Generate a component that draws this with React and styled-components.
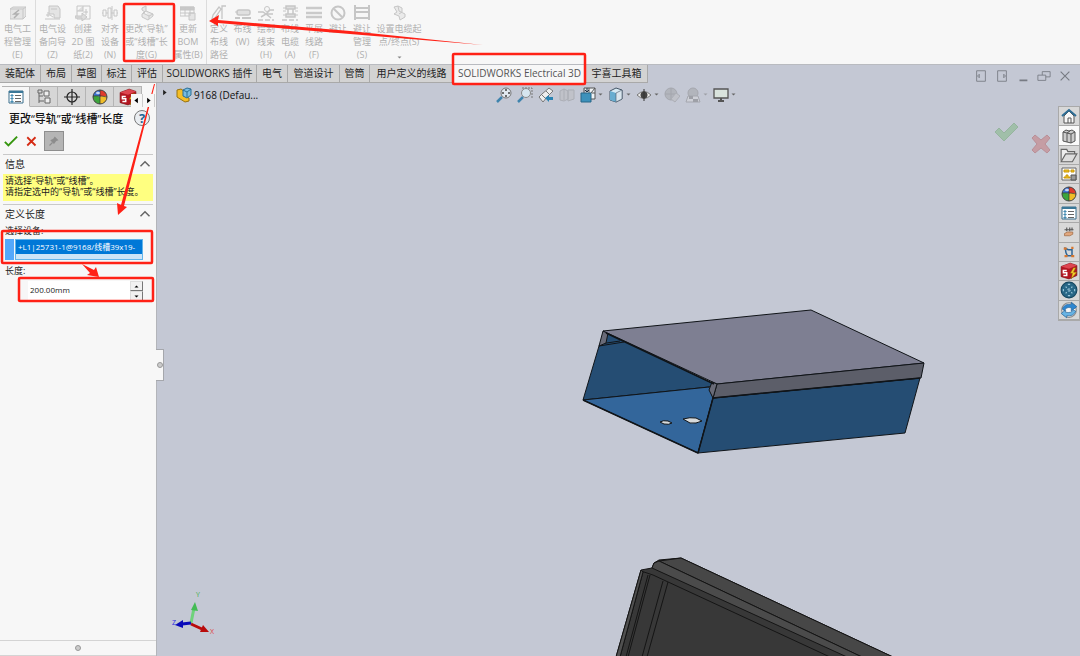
import React, { useState } from "react";
import styled, { createGlobalStyle } from "styled-components";

const GlobalStyle = createGlobalStyle`
  * {
    box-sizing: border-box;
  }
  body {
    margin: 0;
    background: #c4c8d4;
    color: #222;
    font-family: "Open Sans", "Noto Sans CJK SC", sans-serif;
    font-size: 9px;
  }
  button, input {
    font: inherit;
    color: inherit;
    border: 0;
    padding: 0;
    margin: 0;
    background: none;
  }
  h1, h2, p, ul {
    margin: 0;
    padding: 0;
    font-weight: 400;
  }
  svg {
    display: block;
    flex: none;
  }
`;

const Page = styled.div`
  position: relative;
  min-height: 100vh;
  display: flex;
  flex-direction: column;
  overflow: hidden;
`;

const Ribbon = styled.div`
  display: flex;
  height: 64px;
  background: #f7f7f7;
`;

const Tool = styled.button`
  display: flex;
  flex-direction: column;
  align-items: center;
  gap: 1px;
  width: ${(p) => p.$width}px;
  padding-top: 5px;
  border-right: ${(p) => (p.$divider ? "1px solid #dcdcdc" : "0")};
  color: #b0b0b0;
  line-height: 13px;
  white-space: nowrap;
`;

const ToolLabel = styled.span`
  display: flex;
  flex-direction: column;
  align-items: center;
`;

const TabBar = styled.div`
  display: flex;
  height: 19px;
  border-top: 1px solid #b9bbc0;
`;

const Tab = styled.button`
  width: ${(p) => p.$width}px;
  white-space: nowrap;
  font-size: 10px;
  line-height: 17px;
  color: ${(p) => (p.$active ? "#555" : "#222")};
  background: ${(p) => (p.$active ? "#f7f7f7" : "#d3d3d3")};
  border-right: 1px solid #a9a9a9;
  border-bottom: 1px solid ${(p) => (p.$active ? "#f7f7f7" : "#a9a9a9")};
`;

const WindowControls = styled.div`
  display: flex;
  align-items: flex-end;
  gap: 7px;
  margin-left: auto;
  padding-right: 8px;
`;

const Body = styled.div`
  flex: 1;
  display: flex;
`;

const Panel = styled.aside`
  display: flex;
  flex-direction: column;
  width: 157px;
  background: #f7f7f7;
  border-right: 1px solid #b3b5ba;
`;

const PanelTabs = styled.div`
  display: flex;
  height: 24px;
  padding: 3px 0 0 2px;
`;

const PanelTab = styled.button`
  display: grid;
  place-items: center;
  width: 28px;
  border: 1px solid #b4b4b4;
  border-left: 0;
  border-bottom-color: ${(p) => (p.$active ? "#f7f7f7" : "#b4b4b4")};
  background: ${(p) => (p.$active ? "#f7f7f7" : "#d6d6d6")};
`;

const TabScroll = styled.div`
  display: flex;
  align-self: flex-end;
  margin-left: -11px;
  z-index: 1;
`;

const ScrollButton = styled.button`
  display: grid;
  place-items: center;
  width: 12px;
  height: 13px;
  background: #f7f7f7;
  border-right: 1px solid #ccc;
`;

const PanelHeader = styled.div`
  display: flex;
  align-items: center;
  justify-content: space-between;
  height: 22px;
  padding: 0 6px 0 9px;
`;

const PanelTitle = styled.h1`
  font-size: 11px;
  font-weight: 500;
  color: #111;
  white-space: nowrap;
`;

const HelpButton = styled.button`
  width: 16px;
  height: 16px;
  border: 1px solid #777;
  border-radius: 50%;
  background: #e9edf1;
  color: #1f6694;
  font-size: 13px;
  font-weight: 700;
  line-height: 14px;
`;

const PanelActions = styled.div`
  display: flex;
  align-items: center;
  gap: 6px;
  height: 23px;
  padding-left: 4px;
`;

const ActionButton = styled.button`
  display: grid;
  place-items: center;
  width: ${(p) => (p.$pressed ? 20 : 14)}px;
  height: 20px;
  border: ${(p) => (p.$pressed ? "1px solid #8e8e8e" : "0")};
  background: ${(p) => (p.$pressed ? "#b5b5b5" : "none")};
`;

const Section = styled.section`
  margin: ${(p) => p.$top || 0}px 3px 0;
  border-top: 1px solid #c9c9c9;
`;

const SectionHeader = styled.button`
  display: flex;
  align-items: center;
  justify-content: space-between;
  width: 100%;
  height: 19px;
  padding: 0 2px 2px;
  font-size: 10px;
`;

const Message = styled.p`
  padding: 1px 2px;
  height: 27px;
  line-height: 11px;
  background: #ffff80;
  white-space: nowrap;
`;

const FieldLabel = styled.label`
  display: block;
  height: ${(p) => p.$height}px;
  padding-left: 2px;
  line-height: 13px;
`;

const Selection = styled.div`
  display: flex;
  gap: 1px;
  height: 21px;
  margin: 3px 10px 4px 2px;
`;

const Swatch = styled.span`
  width: 9px;
  background: #55a8fb;
`;

const SelectionList = styled.ul`
  flex: 1;
  min-width: 0;
  border: 1px solid #62b4ea;
  background: #cce4f7;
  list-style: none;
`;

const SelectionItem = styled.li`
  height: 14px;
  padding-left: 2px;
  font-size: 8px;
  line-height: 14px;
  white-space: nowrap;
  color: #fff;
  background: #0078d7;
`;

const Spinner = styled.div`
  display: flex;
  height: 20px;
  margin: 0 10px 0 25px;
  background: #fff;
`;

const LengthInput = styled.input`
  flex: 1;
  min-width: 0;
  height: 16px;
  padding-left: 2px;
  font-size: 8px;
  outline: none;
`;

const SpinButtons = styled.div`
  display: flex;
  flex-direction: column;
`;

const SpinButton = styled.button`
  display: grid;
  place-items: center;
  width: 13px;
  height: 10px;
  background: #f1f1f1;
  border: 1px solid #ddd;
  border-right-color: #777;
  border-bottom-color: #777;
`;

const PanelFooter = styled.div`
  display: grid;
  place-items: center;
  height: 16px;
  margin-top: auto;
  border-top: 1px solid #d4d4d4;
  border-bottom: 1px solid #d4d4d4;
`;

const Grip = styled.span`
  width: 6px;
  height: 6px;
  border: 1px solid #999;
  border-radius: 50%;
  background: #ccc;
`;

const Viewport = styled.main`
  position: relative;
  flex: 1;
  min-width: 0;
  display: flex;
  flex-direction: column;
`;

const Scene = styled.svg`
  position: absolute;
  top: 0;
  left: 0;
`;

const PanelHandle = styled.button`
  position: absolute;
  top: 266px;
  left: -1px;
  display: grid;
  place-items: center;
  width: 8px;
  height: 32px;
  background: #f7f7f7;
  border: 1px solid #a5a7ac;
  border-left: 0;
`;

const ViewHeader = styled.div`
  position: relative;
  display: grid;
  grid-template-columns: 1fr auto 1fr;
  align-items: center;
  height: 23px;
`;

const TreeNode = styled.button`
  display: flex;
  align-items: center;
  gap: 2px;
  padding-left: 4px;
  font-size: 10px;
  color: #111;
`;

const TreeArrow = styled.span`
  padding: 0 6px 4px 0;
`;

const HeadsUp = styled.div`
  display: flex;
  align-items: center;
  gap: 5px;
  padding-right: 6px;
`;

const ViewButton = styled.button`
  display: flex;
  align-items: center;
  gap: 2px;
  opacity: ${(p) => (p.$dim ? 0.4 : 1)};
`;

const ViewBody = styled.div`
  position: relative;
  display: flex;
  justify-content: flex-end;
  align-items: flex-start;
`;

const ConfirmCorner = styled.div`
  display: flex;
  gap: 12px;
  padding: 3px 7px 0 0;
`;

const CornerButton = styled.button`
  padding-top: ${(p) => p.$drop || 0}px;
`;

const TaskPane = styled.nav`
  display: flex;
  flex-direction: column;
  width: 22px;
  height: 215px;
  border: 1px solid #a9a9a9;
`;

const PaneButton = styled.button`
  flex: 1;
  display: grid;
  place-items: center;
  background: ${(p) => (p.$active ? "#fafafa" : "#d8d8d8")};
  border-bottom: 1px solid #a9a9a9;
`;

const Annotations = styled.svg`
  position: absolute;
  top: 0;
  left: 0;
  pointer-events: none;
`;

function Icon({ size = 16, children, ...rest }) {
  return (
    <svg width={size} height={size} viewBox="0 0 16 16" fill="none" aria-hidden="true" {...rest}>
      {children}
    </svg>
  );
}

const RIBBON_ICONS = {
  manage: (
    <>
      <path d="M0 4l3-2h13v9l-3 3H0z" fill="#e4e4e4" />
      <path d="M0 4h13v10M13 4l3-2" />
      <path d="M9 5L4 9h4l-4 4" stroke="#b0b0b0" strokeWidth="1.5" />
    </>
  ),
  wizard: (
    <>
      <path d="M4 1h9l2 3v9H9V9H4z" fill="#e4e4e4" />
      <path d="M1 10h4l3 2M0 14h15M6 4h6M3 7v5" />
    </>
  ),
  create: (
    <>
      <path d="M2 1h13v13H2z" />
      <path d="M8 1v5H2M11 4v6M8 7h5M0 11h7V8l5 4-5 4v-3H0z" fill="#ddd" />
    </>
  ),
  align: <path d="M1 5h3v6H1zM6 3h3v10H6zM12 5h3v6h-3zM10 1v14M4 8h2M9 8h3M0 8h1M15 8h1" />,
  rail: <path d="M3 3l4-2v5l7 3v2l-5 4-6-3V9l3-2-3-2zM7 6L4 8l6 3v3M10 11l4-2" fill="#e8e8e8" />,
  bom: (
    <>
      <path d="M0 2h14v9H0z" />
      <path d="M0 2h14v3H0z" fill="#c8c8c8" />
      <path d="M0 8h14M5 2v9M10 2v9M9 8h6v7H9z" fill="#e4e4e4" />
    </>
  ),
  define: <path d="M8 2l2 2-6 9-3 1 1-4zM15 1h-4v13" strokeWidth="1.3" />,
  route: (
    <>
      <rect x="2" y="5" width="13" height="5" rx="2" fill="#e0e0e0" strokeWidth="1.5" />
      <path d="M0 7h3" />
      <path d="M0 13h5M7 13h9" strokeWidth="2" />
    </>
  ),
  harness: (
    <>
      <circle cx="9" cy="4" r="2.5" />
      <path d="M0 7h5l3 2 4-4h4M3 12l5-3 5 4M9 9h6" strokeWidth="1.5" />
      <path d="M0 15h16" strokeDasharray="5 2" strokeWidth="1.5" />
    </>
  ),
  cable: (
    <>
      <path d="M4 1h9v3H4zM4 9h9v3H4zM6 4v5M11 4v5" fill="#ddd" strokeWidth="1.5" />
      <path d="M1 3h3M13 3h3M1 6h3M13 6h3M1 10h3M13 10h3" />
      <path d="M0 15h16" strokeDasharray="5 2" strokeWidth="1.5" />
    </>
  ),
  flatten: <path d="M0 3h16M0 8h16M0 12h16" stroke="#cacaca" strokeWidth="2.5" />,
  avoid: (
    <>
      <circle cx="8" cy="8" r="6.5" strokeWidth="2" />
      <path d="M4 4l8 8" strokeWidth="2" />
    </>
  ),
  avoidManage: <path d="M1 0v15M15 0v15M1 3h14M1 7h14M1 13h14" strokeWidth="2" />,
  terminal: <path d="M3 2l4-1 1 5 6 3v3l-5 3-1-4-5-2 3-2zM7 1l4 2v4l-3 2" fill="#eaeaea" />,
};

const TOOLS = [
  { icon: "manage", width: 36, lines: ["电气工", "程管理", "(E)"], divider: true },
  { icon: "wizard", width: 33, lines: ["电气设", "备向导", "(Z)"] },
  { icon: "create", width: 28, lines: ["创建", "2D 图", "纸(2)"] },
  { icon: "align", width: 26, lines: ["对齐", "设备", "(N)"] },
  { icon: "rail", width: 47, lines: ["更改“导轨”", "或“线槽”长", "度(G)"] },
  { icon: "bom", width: 37, lines: ["更新", "BOM", "属性(B)"], divider: true },
  { icon: "define", width: 24, lines: ["定义", "布线", "路径"] },
  { icon: "route", width: 23, lines: ["布线", "(W)"] },
  { icon: "harness", width: 24, lines: ["绘制", "线束", "(H)"] },
  { icon: "cable", width: 24, lines: ["布线", "电缆", "(A)"] },
  { icon: "flatten", width: 24, lines: ["平展", "线路", "(F)"] },
  { icon: "avoid", width: 24, lines: ["避让"] },
  { icon: "avoidManage", width: 24, lines: ["避让", "管理", "(S)"] },
  { icon: "terminal", width: 50, lines: ["设置电缆起", "点/终点(S)"], menu: true },
];

const TABS = [
  { label: "装配体", width: 41 },
  { label: "布局", width: 31 },
  { label: "草图", width: 30 },
  { label: "标注", width: 30 },
  { label: "评估", width: 31 },
  { label: "SOLIDWORKS 插件", width: 94 },
  { label: "电气", width: 31 },
  { label: "管道设计", width: 52 },
  { label: "管筒", width: 30 },
  { label: "用户定义的线路", width: 84 },
  { label: "SOLIDWORKS Electrical 3D", width: 132 },
  { label: "宇喜工具箱", width: 62 },
];

function Ball({ size = 16 }) {
  return (
    <Icon size={size}>
      <path d="M8 8L8 1a7 7 0 0 0-7 6z" fill="#3d74d8" />
      <path d="M8 8V1a7 7 0 0 1 7 7q-3-2-7 0z" fill="#e03a2b" />
      <path d="M8 8q4-2 7 0a7 7 0 0 1-7 7z" fill="#f0bd28" />
      <path d="M8 8v7a7 7 0 0 1-7-8q4-1 7 1z" fill="#3ca53c" />
      <circle cx="8" cy="8" r="7" stroke="#444" />
      <path d="M8 1v14M1 7q7-1 14 1" stroke="#333" strokeWidth=".7" />
      <ellipse cx="6" cy="4" rx="2" ry="1.3" fill="#fff" opacity=".7" />
    </Icon>
  );
}

function ListIcon() {
  return (
    <Icon>
      <path d="M1 2h14v12H1z" fill="#fff" stroke="#3b6f8c" />
      <path d="M1 2h14v2H1z" fill="#3b7898" />
      <path d="M3 6h2v1H3zM3 9h2v1H3zM3 12h2v1H3z" stroke="#2d7ca8" />
      <path d="M7 6.5h6M7 9.5h6M7 12.5h6" stroke="#666" />
    </Icon>
  );
}

function CubeS() {
  return (
    <Icon size={18}>
      <path d="M1 4l8-3 6 2v9l-7 3-7-2z" fill="#b41520" stroke="#7c0d14" strokeWidth=".6" />
      <path d="M1 4l7 2 7-3-6-2z" fill="#dd4650" />
      <path d="M6 7.5H3v2h3V12H3" stroke="#fff" strokeWidth="1.3" />
      <path d="M12 5l-3 5h2l-1 5 5-6h-3l2-4z" fill="#f6cc2b" stroke="#775400" strokeWidth=".4" />
    </Icon>
  );
}

const PANEL_TABS = [
  { name: "PropertyManager", icon: <ListIcon /> },
  {
    name: "ConfigurationManager",
    icon: (
      <Icon stroke="#666">
        <path d="M2 1h4v3H2zM3 4v10M3 12h5M3 7h4" />
        <path d="M8 2h5v5H8zM9 9h5v5H9z" fill="#eee" />
      </Icon>
    ),
  },
  {
    name: "DimXpertManager",
    icon: (
      <Icon stroke="#222" strokeWidth="1.2">
        <circle cx="8" cy="8" r="5" />
        <path d="M8 0v16M0 8h16" />
      </Icon>
    ),
  },
  { name: "DisplayManager", icon: <Ball /> },
  { name: "Electrical", icon: <CubeS /> },
];

const WINDOW_ICONS = [
  ["左", <path d="M3 2h10v12H3zM6 6v4L4 8z" />],
  ["右", <path d="M3 2h10v12H3zM10 6v4l2-2z" />],
  ["最小化", <path d="M4 13h9" strokeWidth="2" />],
  ["还原", <path d="M1 7h9v6H1zM6 7V3h9v6h-5" />],
  ["关闭", <path d="M3 3l10 10M13 3L3 13" strokeWidth="1.3" />],
];

const VIEW_ICONS = [
  {
    name: "整屏显示全图",
    art: (
      <>
        <circle cx="10" cy="6" r="5" fill="#e1e8ef" stroke="#777" />
        <path d="M10 2v2M10 8v2M6 6h2M12 6h2" stroke="#444" strokeWidth="1.5" />
        <path d="M6 10l-5 5" stroke="#3f84ad" strokeWidth="2.5" />
      </>
    ),
  },
  {
    name: "局部放大",
    art: (
      <>
        <path d="M5 1h10v10" stroke="#777" strokeDasharray="2 1" />
        <circle cx="9" cy="6" r="4.5" fill="#d5e5ef" stroke="#888" />
        <path d="M6 10l-5 5" stroke="#3f84ad" strokeWidth="2.5" />
      </>
    ),
  },
  {
    name: "上一视图",
    art: (
      <>
        <path d="M1 10l3-3 7-6 4 3-6 6-4 5z" fill="#eee" stroke="#777" />
        <path d="M4 8l4 4M8 4l4 4" stroke="#777" />
        <path d="M7 11l4-3v2h4v3h-4v2z" fill="#2b83b2" />
      </>
    ),
  },
  {
    name: "剖面视图",
    dim: true,
    art: <path d="M1 4l4-2 4 2v8l-4 2-4-1zM9 3h6v9l-6 2zM5 2v11" fill="#bbb" stroke="#888" />,
  },
  {
    name: "视图定向",
    menu: true,
    art: (
      <>
        <path d="M4 1h11v11h-4M4 1v5M15 1l-4 5M9 1v5M12 6h3" fill="#eef2f5" stroke="#555" />
        <path d="M1 6h10v9H1z" fill="#3d91bb" stroke="#286787" />
        <path d="M7 1v4M5 3l2 2 2-2" stroke="#234" />
      </>
    ),
  },
  {
    name: "显示样式",
    menu: true,
    art: (
      <>
        <path d="M2 4l6-3 6 2v9l-6 3-6-2z" fill="#d5e9f3" stroke="#456" />
        <path d="M2 4l6 2v9l-6-2z" fill="#67add0" />
        <path d="M8 6l6-3v9l-6 3z" fill="#d9e6ee" stroke="#456" strokeWidth=".6" />
      </>
    ),
  },
  {
    name: "隐藏/显示项目",
    menu: true,
    art: (
      <>
        <path d="M1 8q7-7 14 0-7 7-14 0z" fill="#eee" stroke="#777" />
        <circle cx="8" cy="8" r="3.5" fill="#444" />
        <path d="M8 2v12" stroke="#333" />
      </>
    ),
  },
  {
    name: "编辑外观",
    dim: true,
    art: (
      <>
        <circle cx="7" cy="7" r="6" fill="#999" stroke="#777" />
        <path d="M1 7h12M7 1v12" stroke="#777" />
        <path d="M7 12l5-6 4 3-5 6z" fill="#bbb" stroke="#888" />
      </>
    ),
  },
  {
    name: "应用布景",
    menu: true,
    dim: true,
    art: (
      <>
        <circle cx="8" cy="6" r="5" fill="#999" stroke="#777" />
        <path d="M1 15l2-6h10l2 6z" fill="#ddd" stroke="#777" />
        <path d="M4 9h4v3H4zM8 12h5v3H8z" fill="#666" />
      </>
    ),
  },
  {
    name: "视图设定",
    menu: true,
    art: (
      <>
        <path d="M1 2h14v9H1z" fill="#d9e3dd" stroke="#555" strokeWidth="1.3" />
        <path d="M8 11v3M5 14h6" stroke="#555" strokeWidth="2" />
      </>
    ),
  },
];

const PANE_ICONS = [
  {
    name: "主页",
    icon: (
      <Icon>
        <path d="M3 8v7h10V8L8 3z" fill="#f7f7f7" stroke="#555" />
        <path d="M1 8l7-6 7 6" stroke="#2c6c94" strokeWidth="2" />
        <path d="M7 15v-5h3v5" stroke="#555" />
      </Icon>
    ),
  },
  {
    name: "设计库",
    icon: (
      <Icon stroke="#555">
        <path d="M2 4l3-2 3 1 3-1 3 2v9l-4 2-8-2z" fill="#ccc" />
        <path d="M2 4l4 1v9M6 5l3-2M6 5l4 1v9M10 6l4-2" />
      </Icon>
    ),
  },
  {
    name: "文件探索器",
    icon: (
      <Icon size={18}>
        <path d="M1 13V3h5l1 2h6v3" fill="#eee" stroke="#666" />
        <path d="M1 14l4-7h10l-4 7z" fill="#ddd" stroke="#666" />
      </Icon>
    ),
  },
  {
    name: "视图调色板",
    icon: (
      <Icon>
        <path d="M1 2h14v12H1z" fill="#fff" stroke="#666" />
        <path d="M3 4h5v2H3zM10 4h3v2h-3zM5 9h2v2h2v1H3v-1h2z" fill="#f7c924" stroke="#c79508" />
        <path d="M10 9h5v5h-5z" fill="#999" stroke="#555" />
      </Icon>
    ),
  },
  { name: "外观", icon: <Ball /> },
  { name: "自定义属性", icon: <ListIcon /> },
  {
    name: "线束",
    icon: (
      <Icon size={12}>
        <path d="M2 5h12M5 2v5M9 2v5M12 2v4" stroke="#555" strokeWidth="1.5" />
        <path d="M2 10l4-2h7v3l-4 2H2z" fill="#e1a77d" stroke="#a16c46" />
      </Icon>
    ),
  },
  {
    name: "布线",
    icon: (
      <Icon size={12}>
        <path d="M3 3l4 2h5v8H6L4 9z" stroke="#2f6695" strokeWidth="2" />
        <path d="M1 2h4v3H1zM11 12h4v3h-4zM11 1h3v3h-3zM2 12h4v3H2z" fill="#d9772c" />
      </Icon>
    ),
  },
  { name: "Electrical", icon: <CubeS /> },
  {
    name: "资源",
    icon: (
      <Icon size={18}>
        <circle cx="8" cy="8" r="7" fill="#286786" stroke="#164761" />
        <path d="M7 3h2M7 13h2M3 7v2M13 7v2M5 5l1 1M11 5l-1 1M5 11l1-1M11 11l-1-1" stroke="#9cc7db" />
        <path d="M9 7H7v1h2v1H7" stroke="#9cc7db" strokeWidth=".7" />
      </Icon>
    ),
  },
  {
    name: "同步",
    icon: (
      <Icon size={18}>
        <circle cx="8" cy="8" r="6.5" fill="#f6f6f6" stroke="#888" />
        <path d="M2 7q2-5 8-4V1l5 4-5 4V6Q5 5 4 9z" fill="#2d86d0" stroke="#1d5588" strokeWidth=".5" />
        <path d="M14 9q-2 5-8 4v2l-5-4 4-3v2q5 1 7-2z" fill="#68b4e4" stroke="#1d5588" strokeWidth=".5" />
      </Icon>
    ),
  },
];

function Caret({ dir = "down", size = 5, color = "#666", ...rest }) {
  const shapes = {
    down: "M1 3h8L5 7z",
    up: "M1 7h8L5 3z",
    left: "M7 1v8L2 5z",
    right: "M3 1v8l5-4z",
  };
  return (
    <svg width={size} height={size} viewBox="0 0 10 10" aria-hidden="true" {...rest}>
      <path d={shapes[dir]} fill={color} />
    </svg>
  );
}

function Chevron() {
  return (
    <Icon size={12}>
      <path d="M2 11l6-6 6 6" stroke="#666" strokeWidth="2" />
    </Icon>
  );
}

function PropertyPanel() {
  const [length, setLength] = useState("200.00mm");
  const step = (n) => setLength(`${(parseFloat(length) + n).toFixed(2)}mm`);

  return (
    <Panel>
      <PanelTabs>
        {PANEL_TABS.map((t, i) => (
          <PanelTab key={t.name} $active={i === 0} aria-label={t.name}>
            {t.icon}
          </PanelTab>
        ))}
        <TabScroll>
          <ScrollButton aria-label="向左">
            <Caret dir="left" size={7} color="#000" />
          </ScrollButton>
          <ScrollButton aria-label="向右">
            <Caret dir="right" size={7} color="#000" />
          </ScrollButton>
        </TabScroll>
      </PanelTabs>

      <PanelHeader>
        <PanelTitle>更改“导轨”或“线槽”长度</PanelTitle>
        <HelpButton aria-label="帮助">?</HelpButton>
      </PanelHeader>
      <PanelActions>
        <ActionButton aria-label="确定">
          <Icon size={14}>
            <path d="M1 9l4 4L15 3" stroke="#36960f" strokeWidth="2.2" />
          </Icon>
        </ActionButton>
        <ActionButton aria-label="取消">
          <Icon size={12}>
            <path d="M3 3l11 11M14 3L3 14" stroke="#d52b14" strokeWidth="2.4" />
          </Icon>
        </ActionButton>
        <ActionButton $pressed aria-label="保持可见">
          <Icon size={12}>
            <path d="M9 2l5 5-3 1-3 4-5-5 4-2z" fill="#8c8c8c" />
            <path d="M6 10l-4 4" stroke="#8c8c8c" strokeWidth="1.5" />
          </Icon>
        </ActionButton>
      </PanelActions>

      <Section $top={2}>
        <SectionHeader>
          信息
          <Chevron />
        </SectionHeader>
        <Message>
          请选择“导轨”或“线槽”。
          <br />
          请指定选中的“导轨”或“线槽”长度。
        </Message>
      </Section>
      <Section $top={3}>
        <SectionHeader>
          定义长度
          <Chevron />
        </SectionHeader>
        <FieldLabel as="div" id="device-label" $height={12}>
          选择设备:
        </FieldLabel>
        <Selection>
          <Swatch />
          <SelectionList role="listbox" aria-labelledby="device-label">
            <SelectionItem role="option" aria-selected="true">
              +L1|25731-1@9168/线槽39x19-
            </SelectionItem>
          </SelectionList>
        </Selection>
        <FieldLabel htmlFor="length" $height={17}>
          长度:
        </FieldLabel>
        <Spinner>
          <LengthInput id="length" value={length} onChange={(e) => setLength(e.target.value)} />
          <SpinButtons>
            <SpinButton aria-label="增加" onClick={() => step(10)}>
              <Caret dir="up" color="#000" />
            </SpinButton>
            <SpinButton aria-label="减少" onClick={() => step(-10)}>
              <Caret color="#000" />
            </SpinButton>
          </SpinButtons>
        </Spinner>
      </Section>
      <PanelFooter>
        <Grip />
      </PanelFooter>
    </Panel>
  );
}

function Model() {
  return (
    <Scene width="923" height="573" viewBox="157 83 923 573" strokeLinejoin="round" aria-hidden="true">
      {/* wiring duct with cover */}
      <g stroke="#101418" strokeWidth="1">
        <path d="M599 346L607 333L714 384L709 387L583 400z" fill="#254d73" />
        <path d="M583 400L709 387L713 398L698 453z" fill="#33669b" />
        <path d="M713 398L920 378L905 433L698 453z" fill="#254d73" />
        <path d="M599 346l25-4M600 344l20-3" />
        <path d="M603 331L608 333L606 343L599 346z" fill="#696b78" />
        <path d="M603 331L811 310L924 363L717 384z" fill="#7e7f92" />
        <path d="M717 384L924 363L921 378L713 398z" fill="#5c5e69" />
        <path d="M712 382L717 384L713 398L709 390z" fill="#696b78" />
        <path d="M713 398L920 378M606 333L714 384M583 400L698 453L713 398" strokeWidth="1.5" fill="none" />
        <path d="M660 422q3-2 8-1l4 2q-3 2-8 1zM683 419q7-2 13-1l6 3q-6 3-12 2z" fill="#d7dadb" />
      </g>
      {/* cabinet corner */}
      <g stroke="#151515" strokeWidth="1">
        <path d="M616 657L641 570L652 568L654 563L659 560L681 558L893 657z" fill="#383838" />
        <path d="M659 561L681 558L893 657H862z" fill="#474747" />
        <path d="M652 568L654 563L659 561L862 657H847z" fill="#4b4b4b" />
        <path
          d="M641 571l12 4L830 657M643 572L620 657M648 575L626 657M650 575L628 657M663 581L642 657M668 582L647 657"
          fill="none"
        />
        <path d="M616 657L641 570L643 572L620 657z" fill="#505050" />
      </g>
      {/* axis triad */}
      <g strokeWidth="3" fontSize="7" fontFamily="Open Sans">
        <path d="M191 623L194 608" stroke="#6fd27b" />
        <path d="M191 610l4-8 3 9z" fill="#43bb54" />
        <path d="M191 624L202 629" stroke="#b90b0b" />
        <path d="M200 632l3-7 6 7z" fill="#b90b0b" />
        <path d="M191 623L182 624" stroke="#0909b9" />
        <path d="M183 620v8l-8-3z" fill="#0909b9" />
        <text x="196" y="597" fill="#3eae4b">Y</text>
        <text x="210" y="634" fill="#e04646">X</text>
        <text x="172" y="625" fill="#3030e0">Z</text>
      </g>
    </Scene>
  );
}

function GraphicsView() {
  return (
    <Viewport>
      <Model />
      <PanelHandle aria-label="折叠面板">
        <Grip />
      </PanelHandle>
      <ViewHeader>
        <TreeNode>
          <TreeArrow>
            <Caret dir="right" size={7} color="#222" />
          </TreeArrow>
          <Icon>
            <path d="M1 3l4-1 3 2v5l5 2v3l-4 1-8-5z" fill="#f5be27" stroke="#98720f" />
            <path d="M7 3l4-2 4 1v6l-4 3-4-2z" fill="#79bce0" stroke="#2a6f95" />
            <path d="M7 3l4 2v5M11 5l4-3" stroke="#2a6f95" />
          </Icon>
          9168 (Defau...
        </TreeNode>
        <HeadsUp>
          {VIEW_ICONS.map((v) => (
            <ViewButton key={v.name} $dim={v.dim} aria-label={v.name}>
              <Icon>{v.art}</Icon>
              {v.menu && <Caret />}
            </ViewButton>
          ))}
        </HeadsUp>
      </ViewHeader>
      <ViewBody>
        <ConfirmCorner>
          <CornerButton aria-label="确定">
            <svg width="25" height="20" viewBox="0 0 25 20">
              <path d="M1 10l4-4 5 5L20 1l4 4-14 14z" fill="#a0bfa9" stroke="#96b49f" />
            </svg>
          </CornerButton>
          <CornerButton $drop={25} aria-label="取消">
            <svg width="20" height="20" viewBox="0 0 20 20">
              <path
                d="M4 1l6 5 6-5 3 3-5 6 5 6-3 3-6-5-6 5-3-3 5-6-5-6z"
                fill="#c59da4"
                stroke="#b98f97"
              />
            </svg>
          </CornerButton>
        </ConfirmCorner>
        <TaskPane>
          {PANE_ICONS.map((p, i) => (
            <PaneButton key={p.name} $active={i === 1} aria-label={p.name}>
              {p.icon}
            </PaneButton>
          ))}
        </TaskPane>
      </ViewBody>
    </Viewport>
  );
}

export default function App() {
  const [active, setActive] = useState(10);

  return (
    <Page>
      <GlobalStyle />
      <Ribbon>
        {TOOLS.map((t) => (
          <Tool key={t.icon} $width={t.width} $divider={t.divider}>
            <Icon stroke="#c6c6c6">{RIBBON_ICONS[t.icon]}</Icon>
            <ToolLabel>
              {t.lines.map((line) => (
                <span key={line}>{line}</span>
              ))}
            </ToolLabel>
            {t.menu && <Caret dir="down" color="#888" style={{ marginTop: 6 }} />}
          </Tool>
        ))}
      </Ribbon>
      <TabBar>
        {TABS.map((t, i) => (
          <Tab key={t.label} $width={t.width} $active={i === active} onClick={() => setActive(i)}>
            {t.label}
          </Tab>
        ))}
        <WindowControls>
          {WINDOW_ICONS.map(([name, art]) => (
            <button key={name} aria-label={name}>
              <Icon size={14} stroke="#777b83">
                {art}
              </Icon>
            </button>
          ))}
        </WindowControls>
      </TabBar>
      <Body>
        <PropertyPanel />
        <GraphicsView />
      </Body>

      {/* tutorial call-outs */}
      <Annotations width="1080" height="656" viewBox="0 0 1080 656" aria-hidden="true">
        <g fill="none" stroke="#ff2116" strokeWidth="2.5">
          <rect x="124" y="4" width="50" height="57" rx="1" />
          <rect x="453" y="54" width="132" height="30" rx="1" />
          <rect x="2" y="231" width="150" height="32" rx="1" />
          <rect x="19" y="278" width="134" height="23" rx="1" />
        </g>
        <g fill="#ff2116">
          <path d="M209 21l10-6-1 5L350 31 483 45 350 34 218 23v3z" />
          <path d="M154 84h1L124 206l3 1-9 8-1-12 4 2z" />
          <path d="M82 264l12 6 2-3 3 10-12-2 3-2z" />
        </g>
      </Annotations>
    </Page>
  );
}
